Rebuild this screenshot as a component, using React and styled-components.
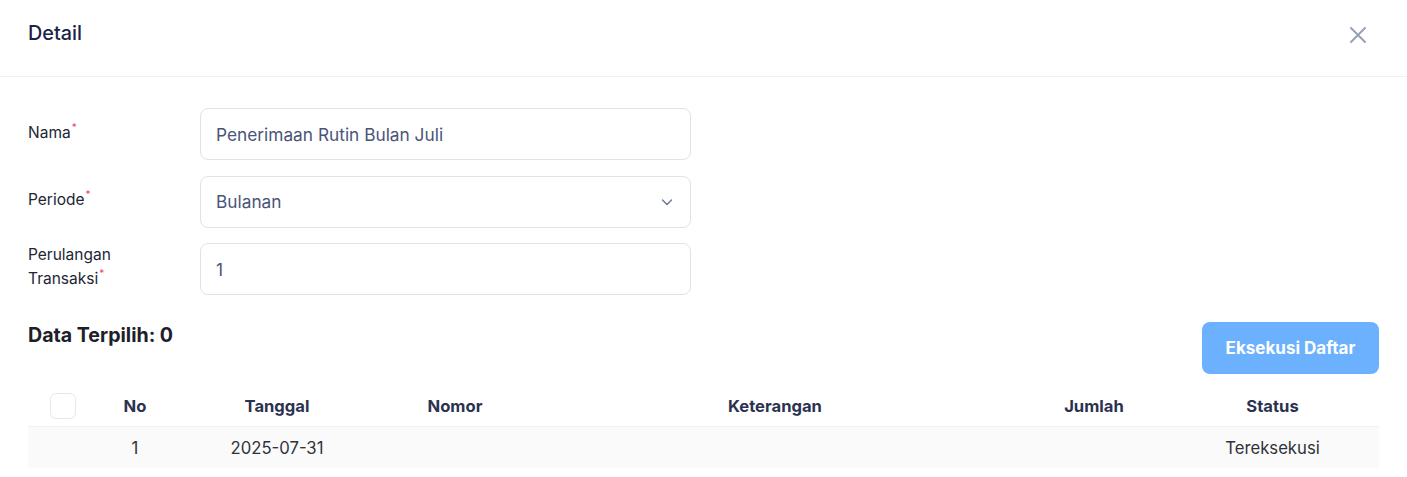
import React from 'react';
import styled, { createGlobalStyle } from 'styled-components';

const Global = createGlobalStyle`
  * { box-sizing: border-box; }
  body {
    margin: 0;
    background: #fff;
    font-family: Inter, "Noto Sans", sans-serif;
  }
`;

const Header = styled.div`
  height: 77px;
  display: flex;
  align-items: center;
  justify-content: space-between;
  padding: 0 39px 0 28px;
  border-bottom: 1px solid #eef0f4;
`;

const Title = styled.h2`
  margin: 0 0 10px;
  font-size: 19.8px;
  font-weight: 500;
  color: #1b2447;
`;

const Close = styled.button`
  border: 0;
  background: none;
  padding: 0;
  display: flex;
  color: #97a0b4;
  cursor: pointer;
  margin-top: -6px;
`;

const Body = styled.div`
  padding: 31px 28px 0;
`;

const Form = styled.div`
  display: flex;
  flex-direction: column;
  gap: 15.5px;
`;

const Row = styled.div`
  display: grid;
  grid-template-columns: 172px 491px;
  align-items: center;
`;

const Label = styled.label`
  font-size: 15.5px;
  line-height: 24px;
  color: #222633;
  margin-top: ${p => (p.$tall ? '-5px' : '-3px')};
  sup {
    color: #f0436a;
    font-size: 10px;
    margin-left: 1px;
    vertical-align: 7px;
    line-height: 0;
  }
`;

const Field = styled.div`
  height: 52px;
  border: 1px solid #dfe1ec;
  border-radius: 8px;
  padding: 0 16px 0 15px;
  display: flex;
  align-items: center;
  justify-content: space-between;
  font-size: 17.3px;
  color: #4a5478;
`;

const Toolbar = styled.div`
  display: flex;
  justify-content: space-between;
  align-items: flex-start;
  margin-top: 27px;
`;

const Count = styled.h3`
  margin: 1px 0 0;
  font-size: 19.6px;
  font-weight: 700;
  color: #1e2028;
`;

const ExecButton = styled.button`
  width: 177px;
  height: 52px;
  border: 0;
  border-radius: 8px;
  background: #6cb1fd;
  color: #fff;
  font-family: inherit;
  font-size: 17px;
  font-weight: 700;
  cursor: not-allowed;
`;

const cols = '70px 74px 210px 146px 494px 144px 1fr';

const Table = styled.div`
  margin-top: 11px;
`;

const HeadRow = styled.div`
  display: grid;
  grid-template-columns: ${cols};
  align-items: center;
  height: 42px;
  border-bottom: 1px solid #f0f1f4;
`;

const HeadCell = styled.div`
  text-align: center;
  font-size: 16.6px;
  font-weight: 700;
  color: #2b3250;
`;

const DataRow = styled.div`
  display: grid;
  grid-template-columns: ${cols};
  align-items: center;
  height: 41px;
  background: #fafafa;
`;

const Cell = styled.div`
  text-align: center;
  font-size: 16.7px;
  color: #30323a;
`;

const Check = styled.span`
  display: block;
  width: 26px;
  height: 26px;
  margin: 0 0 0 22px;
  border: 1px solid #e6e7f0;
  border-radius: 6px;
  background: #fff;
`;

const Required = () => <sup>*</sup>;

export default function App() {
  return (
    <>
      <Global />
      <Header>
        <Title>Detail</Title>
        <Close aria-label="close">
          <svg width="20" height="20" viewBox="0 0 20 20" fill="none" stroke="currentColor" strokeWidth="2" strokeLinecap="round">
            <path d="M3 3l14 14M17 3L3 17" />
          </svg>
        </Close>
      </Header>
      <Body>
        <Form>
          <Row>
            <Label>Nama<Required /></Label>
            <Field>Penerimaan Rutin Bulan Juli</Field>
          </Row>
          <Row>
            <Label>Periode<Required /></Label>
            <Field>
              Bulanan
              <svg width="14" height="14" viewBox="0 0 14 14" fill="none" stroke="#6b7390" strokeWidth="1.4" strokeLinecap="round" strokeLinejoin="round">
                <path d="M2.5 5l4.5 4.5L11.5 5" />
              </svg>
            </Field>
          </Row>
          <Row>
            <Label $tall>Perulangan<br />Transaksi<Required /></Label>
            <Field>1</Field>
          </Row>
        </Form>
        <Toolbar>
          <Count>Data Terpilih: 0</Count>
          <ExecButton disabled>Eksekusi Daftar</ExecButton>
        </Toolbar>
        <Table>
          <HeadRow>
            <div><Check /></div>
            <HeadCell>No</HeadCell>
            <HeadCell>Tanggal</HeadCell>
            <HeadCell>Nomor</HeadCell>
            <HeadCell>Keterangan</HeadCell>
            <HeadCell>Jumlah</HeadCell>
            <HeadCell>Status</HeadCell>
          </HeadRow>
          <DataRow>
            <Cell />
            <Cell>1</Cell>
            <Cell>2025-07-31</Cell>
            <Cell />
            <Cell />
            <Cell />
            <Cell>Tereksekusi</Cell>
          </DataRow>
        </Table>
      </Body>
    </>
  );
}
